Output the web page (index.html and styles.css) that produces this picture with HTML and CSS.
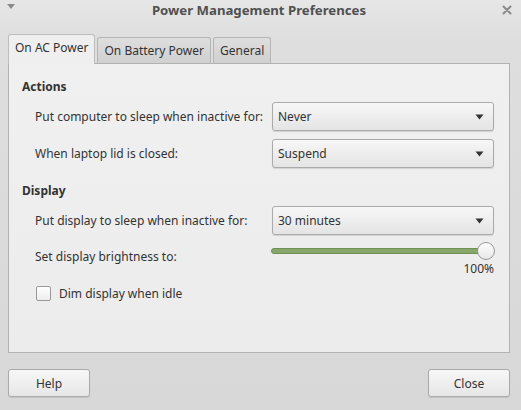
FILE: index.html
```html
<!DOCTYPE html>
<html>
<head>
<meta charset="utf-8">
<link rel="stylesheet" href="styles.css">
</head>
<body>
<div class="window">
  <div class="titlebar">
    <svg class="menu-arrow" width="10" height="8" viewBox="0 0 10 8"><path d="M1 1 L9 1 L5 6 Z" fill="#8a8a8a"/></svg>
    <div class="title">Power Management Preferences</div>
    <svg class="close-x" width="10" height="10" viewBox="0 0 10 10"><path d="M1.5 1.5 L8.5 8.5 M8.5 1.5 L1.5 8.5" stroke="#8a8a8a" stroke-width="2" stroke-linecap="round"/></svg>
  </div>
  <div class="tabs">
    <div class="tab active">On AC Power</div>
    <div class="tab">On Battery Power</div>
    <div class="tab">General</div>
  </div>
  <div class="panel">
    <div class="heading">Actions</div>
    <div class="row first">
      <div class="label">Put computer to sleep when inactive for:</div>
      <div class="combo"><span>Never</span><svg width="9" height="6" viewBox="0 0 9 6"><path d="M0.5 0.5 L8.5 0.5 L4.5 5.5 Z" fill="#333"/></svg></div>
    </div>
    <div class="row">
      <div class="label">When laptop lid is closed:</div>
      <div class="combo"><span>Suspend</span><svg width="9" height="6" viewBox="0 0 9 6"><path d="M0.5 0.5 L8.5 0.5 L4.5 5.5 Z" fill="#333"/></svg></div>
    </div>
    <div class="heading second">Display</div>
    <div class="row first">
      <div class="label">Put display to sleep when inactive for:</div>
      <div class="combo"><span>30 minutes</span><svg width="9" height="6" viewBox="0 0 9 6"><path d="M0.5 0.5 L8.5 0.5 L4.5 5.5 Z" fill="#333"/></svg></div>
    </div>
    <div class="row slider-row">
      <div class="label">Set display brightness to:</div>
      <div class="slider">
        <div class="track"><div class="knob"></div></div>
        <div class="value">100%</div>
      </div>
    </div>
    <div class="check-row">
      <div class="checkbox"></div>
      <div class="check-label">Dim display when idle</div>
    </div>
  </div>
  <div class="buttons">
    <div class="button">Help</div>
    <div class="button">Close</div>
  </div>
</div>
</body>
</html>
```

FILE: styles.css
```css
html, body {
  margin: 0;
  padding: 0;
}
body {
  width: 521px;
  height: 410px;
  overflow: hidden;
  font-family: "Noto Sans", "Open Sans", sans-serif;
  font-size: 12px;
  color: #333;
}
.window {
  width: 521px;
  height: 410px;
  background: linear-gradient(#e6e6e6 0px, #dedede 40px, #d8d8d8 410px);
  display: flex;
  flex-direction: column;
}
.titlebar {
  height: 20px;
  padding: 0 9px 0 6px;
  display: flex;
  align-items: center;
  justify-content: space-between;
}
.title {
  font-weight: bold;
  font-size: 13.2px;
  color: #505050;
}
.menu-arrow { margin-top: -6px; }
.tabs {
  display: flex;
  align-items: flex-end;
  padding: 14px 0 0 8px;
  gap: 2px;
  height: 29px;
  position: relative;
  z-index: 1;
}
.tab {
  height: 26px;
  padding: 0 6px;
  display: flex;
  align-items: center;
  border: 1px solid #b5b5b5;
  border-bottom: none;
  border-radius: 3px 3px 0 0;
  background: linear-gradient(#dedede, #d0d0d0);
  color: #333;
  box-sizing: border-box;
}
.tab.active {
  height: 30px;
  margin-bottom: -1px;
  padding: 0 6px 4px;
  background: #efefef;
  border-color: #bdbdbd;
}
.panel {
  margin: 0 11px 0 8px;
  height: 290px;
  box-sizing: border-box;
  border: 1px solid #b2b2b2;
  background: linear-gradient(#f0f0f0, #ececec);
  padding: 14px 15px 0 13px;
}
.heading {
  font-weight: bold;
  line-height: 18px;
  height: 18px;
}
.heading.second { margin-top: 14px; }
.row {
  display: flex;
  align-items: center;
  justify-content: space-between;
  margin-top: 8px;
  padding-left: 13px;
}
.row.first { margin-top: 6px; }
.combo {
  width: 222px;
  height: 29px;
  box-sizing: border-box;
  border: 1px solid #aaa;
  border-radius: 3px;
  background: linear-gradient(#f7f7f7, #e4e4e4);
  box-shadow: 0 1px 1px rgba(0,0,0,0.12);
  display: flex;
  align-items: center;
  justify-content: space-between;
  padding: 0 9px 0 5px;
}
.slider-row {
  margin-top: 5px;
  align-items: flex-start;
}
.slider-row .label { margin-top: 8px; }
.slider {
  width: 224px;
  margin-right: -1px;
}
.track {
  position: relative;
  height: 4px;
  margin: 8px 9px 0 0;
  border-radius: 3px;
  background: #86a66a;
  border: 1px solid #6f8f55;
}
.knob {
  position: absolute;
  right: -10px;
  top: -7px;
  width: 16px;
  height: 16px;
  border-radius: 50%;
  border: 1px solid #999;
  background: linear-gradient(#fdfdfd, #e8e8e8);
}
.value {
  text-align: right;
  margin-top: 6px;
  padding-right: 1px;
}
.check-row {
  display: flex;
  align-items: center;
  margin-top: 8px;
  padding-left: 14px;
}
.checkbox {
  width: 13px;
  height: 13px;
  border: 1px solid #999;
  border-radius: 2px;
  background: linear-gradient(#fff, #ececec);
  margin-right: 8px;
}
.buttons {
  display: flex;
  justify-content: space-between;
  padding: 16px 11px 0 8px;
}
.button {
  width: 82px;
  height: 28px;
  box-sizing: border-box;
  border: 1px solid #aaa;
  border-radius: 3px;
  background: linear-gradient(#f7f7f7, #e6e6e6);
  box-shadow: 0 1px 1px rgba(0,0,0,0.1);
  display: flex;
  align-items: center;
  justify-content: center;
}
```
